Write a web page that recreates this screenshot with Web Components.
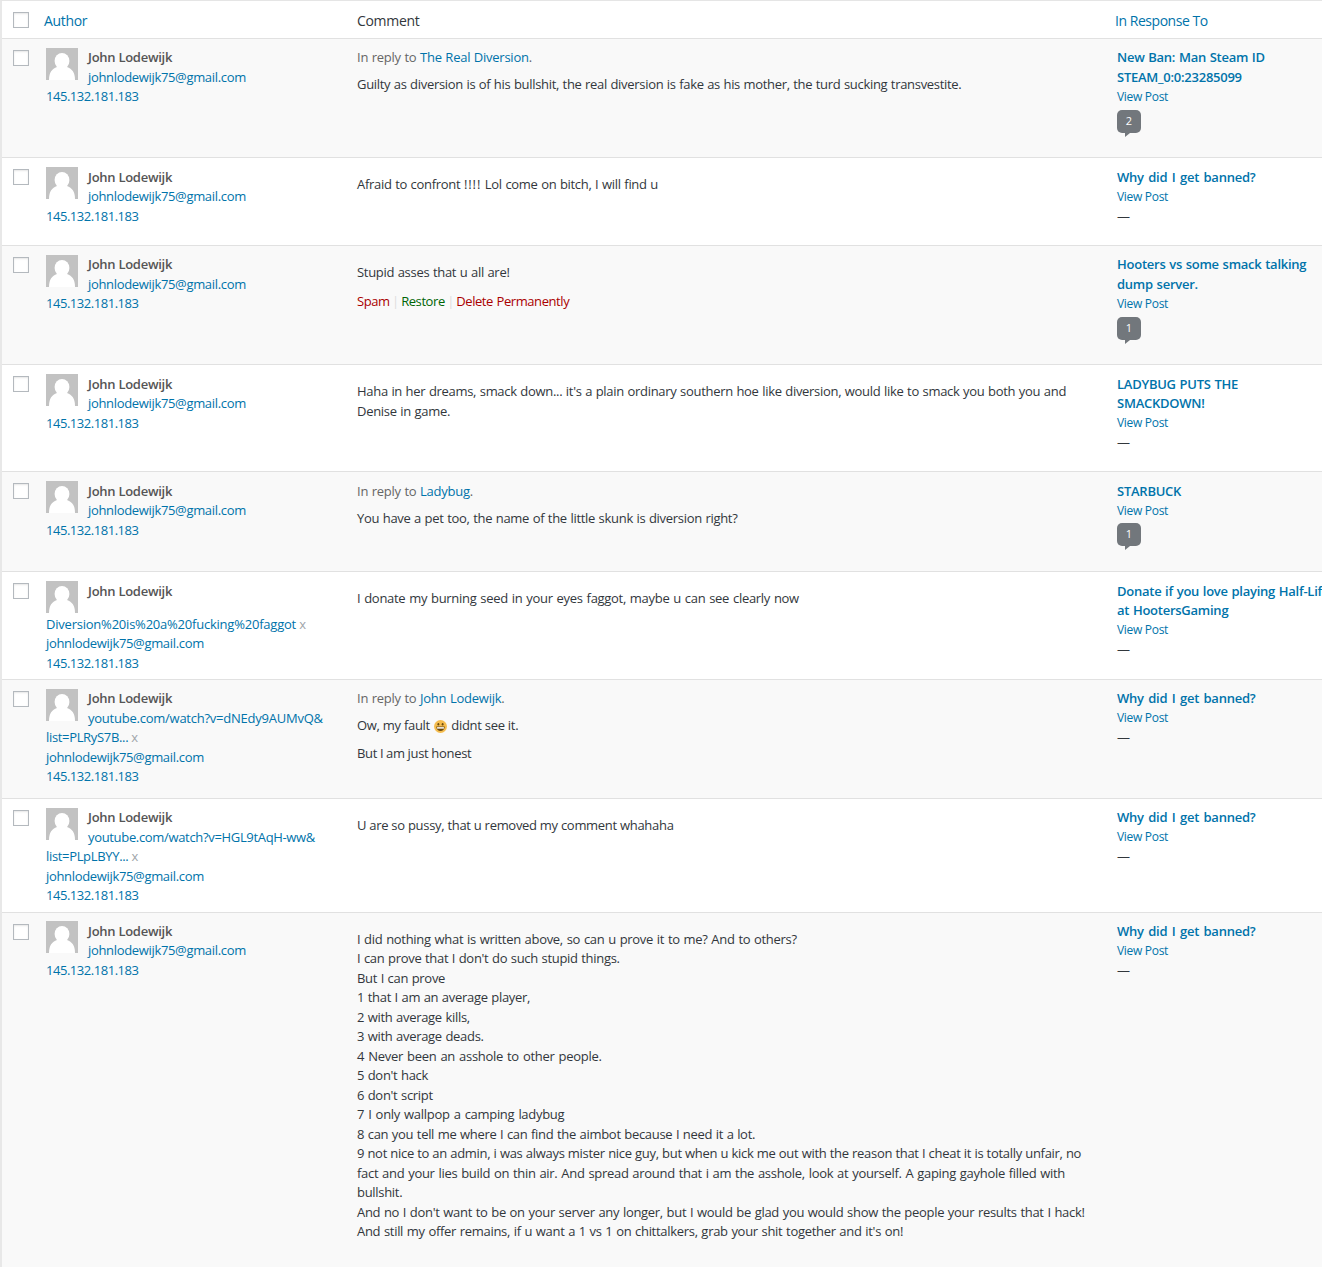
<!DOCTYPE html>
<html lang="en"><head><meta charset="utf-8"><title>Comments</title>
<style>
html,body{margin:0;padding:0;height:1267px;overflow:hidden;background:#fff}
body{font:13px/19.5px "Open Sans","Noto Sans",sans-serif;color:#32373c;letter-spacing:-.33px}
a{color:#0073aa;text-decoration:none}
p{margin:7.85px 0;white-space:nowrap;letter-spacing:-.3px;word-spacing:.5px}
.t{font-weight:600;white-space:nowrap;letter-spacing:-.25px;word-spacing:.6px}
.w{word-spacing:1.35px}
.muted{color:#666;letter-spacing:-.25px;word-spacing:.5px;margin-bottom:-.2px}
.x{color:#a0a5aa}
.spam,.del{color:#a00}.restore{color:#006505}.sep{color:#ddd}
.del{word-spacing:.6px}
.acts{margin-top:9.5px;word-spacing:-.6px;letter-spacing:-.42px}
.line{display:block;white-space:nowrap}
.ip{letter-spacing:-.46px}
.vp{font-size:12px;letter-spacing:-.3px;margin:-.27px 0 .27px}
.u1{letter-spacing:-.24px}
.u2{letter-spacing:-.22px}
</style></head><body>
<comment-table>
<comment-row h="119.4" alt>
 <author-card><a class="line">johnlodewijk75@gmail.com</a><a class="line ip">145.132.181.183</a></author-card>
 <div slot="comment"><div class="muted">In reply to <a>The Real Diversion</a>.</div><p style="word-spacing:.39px">Guilty as diversion is of his bullshit, the real diversion is fake as his mother, the turd sucking transvestite.</p></div>
 <div slot="response"><a class="t line">New Ban: Man Steam ID</a><a class="t line">STEAM_0:0:23285099</a><a class="line vp">View Post</a><comment-bubble>2</comment-bubble></div>
</comment-row>
<comment-row h="87.6">
 <author-card><a class="line">johnlodewijk75@gmail.com</a><a class="line ip">145.132.181.183</a></author-card>
 <div slot="comment"><p>Afraid to confront <span style="letter-spacing:.9px">!!!!</span> Lol come on bitch, I will find u</p></div>
 <div slot="response"><a class="t w line">Why did I get banned?</a><a class="line vp">View Post</a><span class="line">—</span></div>
</comment-row>
<comment-row h="119.4" alt>
 <author-card><a class="line">johnlodewijk75@gmail.com</a><a class="line ip">145.132.181.183</a></author-card>
 <div slot="comment"><p>Stupid asses that u all are!</p><div class="acts"><a class="spam">Spam</a> <span class="sep">|</span> <a class="restore">Restore</a> <span class="sep">|</span> <a class="del">Delete Permanently</a></div></div>
 <div slot="response"><a class="t line">Hooters vs some smack talking</a><a class="t line">dump server.</a><a class="line vp">View Post</a><comment-bubble>1</comment-bubble></div>
</comment-row>
<comment-row h="107">
 <author-card><a class="line">johnlodewijk75@gmail.com</a><a class="line ip">145.132.181.183</a></author-card>
 <div slot="comment"><p>Haha in her dreams, smack down... it's a plain ordinary southern hoe like diversion, would like to smack you both you and<br>Denise in game.</p></div>
 <div slot="response"><a class="t line">LADYBUG PUTS THE</a><a class="t line">SMACKDOWN!</a><a class="line vp">View Post</a><span class="line">—</span></div>
</comment-row>
<comment-row h="100" alt>
 <author-card><a class="line">johnlodewijk75@gmail.com</a><a class="line ip">145.132.181.183</a></author-card>
 <div slot="comment"><div class="muted">In reply to <a>Ladybug</a>.</div><p>You have a pet too, the name of the little skunk is diversion right?</p></div>
 <div slot="response"><a class="t line">STARBUCK</a><a class="line vp">View Post</a><comment-bubble>1</comment-bubble></div>
</comment-row>
<comment-row h="107.6">
 <author-card><span class="line u2" style="clear:both"><a>Diversion%20is%20a%20fucking%20faggot</a> <span class="x">x</span></span><a class="line">johnlodewijk75@gmail.com</a><a class="line ip">145.132.181.183</a></author-card>
 <div slot="comment"><p style="word-spacing:.8px">I donate my burning seed in your eyes faggot, maybe u can see clearly now</p></div>
 <div slot="response"><a class="t line">Donate if you love playing Half-Life</a><a class="t line">at HootersGaming</a><a class="line vp">View Post</a><span class="line">—</span></div>
</comment-row>
<comment-row h="119" alt>
 <author-card><a class="line u1">youtube.com/watch?v=dNEdy9AUMvQ&amp;</a><span class="line"><a>list=PLRyS7B...</a> <span class="x">x</span></span><a class="line">johnlodewijk75@gmail.com</a><a class="line ip">145.132.181.183</a></author-card>
 <div slot="comment"><div class="muted">In reply to <a>John Lodewijk</a>.</div><p style="word-spacing:.1px">Ow, my fault <smile-emoji></smile-emoji> didnt see it.</p><p style="word-spacing:-.25px">But I am just honest</p></div>
 <div slot="response"><a class="t w line">Why did I get banned?</a><a class="line vp">View Post</a><span class="line">—</span></div>
</comment-row>
<comment-row h="113.6">
 <author-card><a class="line">youtube.com/watch?v=HGL9tAqH-ww&amp;</a><span class="line"><a>list=PLpLBYY...</a> <span class="x">x</span></span><a class="line">johnlodewijk75@gmail.com</a><a class="line ip">145.132.181.183</a></author-card>
 <div slot="comment"><p style="word-spacing:.05px">U are so pussy, that u removed my comment whahaha</p></div>
 <div slot="response"><a class="t w line">Why did I get banned?</a><a class="line vp">View Post</a><span class="line">—</span></div>
</comment-row>
<comment-row h="360" alt>
 <author-card><a class="line">johnlodewijk75@gmail.com</a><a class="line ip">145.132.181.183</a></author-card>
 <div slot="comment"><p><span style="word-spacing:.7px">I did nothing what is written above, so can u prove it to me? And to others?</span><br>I can prove that I don't do such stupid things.<br>But I can prove<br>1 that I am an average player,<br>2 with average kills,<br>3 with average deads.<br><span style="word-spacing:1px">4 Never been an asshole to other people.</span><br>5 don't hack<br>6 don't script<br><span style="word-spacing:1px">7 I only wallpop a camping ladybug</span><br>8 can you tell me where I can find the aimbot because I need it a lot.<br><span style="word-spacing:.24px">9 not nice to an admin, i was always mister nice guy, but when u kick me out with the reason that I cheat it is totally unfair, no</span><br><span style="word-spacing:.76px">fact and your lies build on thin air. And spread around that i am the asshole, look at yourself. A gaping gayhole filled with</span><br>bullshit.<br><span style="word-spacing:.62px">And no I don't want to be on your server any longer, but I would be glad you would show the people your results that I hack!</span><br><span style="word-spacing:.6px">And still my offer remains, if u want a 1 vs 1 on chittalkers, grab your shit together and it's on!</span></p></div>
 <div slot="response"><a class="t w line">Why did I get banned?</a><a class="line vp">View Post</a><span class="line">—</span></div>
</comment-row>
</comment-table>
<script>
function def(name,html){customElements.define(name,class extends HTMLElement{
 constructor(){super();this.attachShadow({mode:'open'}).innerHTML=html}
 connectedCallback(){const h=this.getAttribute('h');if(h)this.style.setProperty('--h',h+'px')}
})}
def('wp-checkbox',`<style>:host{display:block;width:16px;height:16px;box-sizing:border-box;border:1px solid #b4b9be;background:#fff;box-shadow:inset 0 1px 2px rgba(0,0,0,.1)}</style>`);
def('comment-table',`<style>
:host{display:block;width:1322px;box-sizing:border-box;border-left:2px solid #e8e8e8;border-top:1px solid #e5e5e5}
.head{display:grid;grid-template-columns:32px 313px 758px 1fr;height:37px;border-bottom:1px solid #e1e1e1;align-items:center;font-size:14px;letter-spacing:-.32px}
.cb{padding-left:11px}
.t{padding:2px 0 0 10px;white-space:nowrap}
.l{color:#0073aa}
.rt{letter-spacing:-.46px}
</style>
<div class="head"><div class="cb"><wp-checkbox></wp-checkbox></div><div class="t l">Author</div><div class="t">Comment</div><div class="t l rt">In Response To</div></div><slot></slot>`);
def('comment-row',`<style>
:host{display:grid;grid-template-columns:32px 313px 758px 1fr;height:var(--h);box-sizing:border-box;border-bottom:1px solid #e1e1e1;background:#fff}
:host([alt]){background:#f9f9f9}
.cb{padding:11px 0 0 11px}
.a{padding:9.2px 10px 0 12px}
.c{padding:9.2px 10px 0 10px}
.r{padding:9.2px 0 0 12px;white-space:nowrap}
</style>
<div class="cb"><wp-checkbox></wp-checkbox></div>
<div class="a"><slot></slot></div>
<div class="c"><slot name="comment"></slot></div>
<div class="r"><slot name="response"></slot></div>`);
def('user-avatar',`<style>:host{display:block;float:left;width:32px;height:32px;margin:-.4px 10px 1.7px 0}svg{display:block}</style>
<svg width="32" height="32" viewBox="0 0 32 32"><rect width="32" height="32" fill="#c2c2c2"/><ellipse cx="16" cy="13" rx="7.4" ry="8" fill="#fff"/><path d="M3 32c0-8 3-11 8-13h10c5 2 8 5 8 13z" fill="#fff"/></svg>`);
def('author-card',`<style>:host{display:block}.n{color:#555;font-weight:600;white-space:nowrap;letter-spacing:-.27px;padding-left:1.2px}</style><user-avatar></user-avatar><div class="n">John Lodewijk</div><slot></slot>`);
def('comment-bubble',`<style>:host{display:block;position:relative;width:24px;height:23px;margin-top:3.2px;background:#72777c;border-radius:5px;color:#fff;font-size:11px;line-height:22px;text-align:center;letter-spacing:0}
:host::after{content:"";position:absolute;left:8px;top:23px;border-left:5px solid #72777c;border-bottom:4px solid transparent}</style><slot></slot>`);
def('smile-emoji',`<style>:host{display:inline-block;width:13px;height:13px;vertical-align:-2.5px;margin:0 1px}svg{display:block}</style>
<svg width="13" height="13" viewBox="0 0 14 14"><circle cx="7" cy="7" r="7" fill="#f5bd4f"/><ellipse cx="4.7" cy="4.6" rx="1" ry="1.3" fill="#6b4a10"/><ellipse cx="9.3" cy="4.6" rx="1" ry="1.3" fill="#6b4a10"/><path d="M2.4 7h9.2c0 3-2.1 4.8-4.6 4.8S2.4 10 2.4 7z" fill="#6b4a10"/><path d="M3.3 7.7h7.4v1.6H3.3z" fill="#fff"/></svg>`);
</script>
</body></html>
